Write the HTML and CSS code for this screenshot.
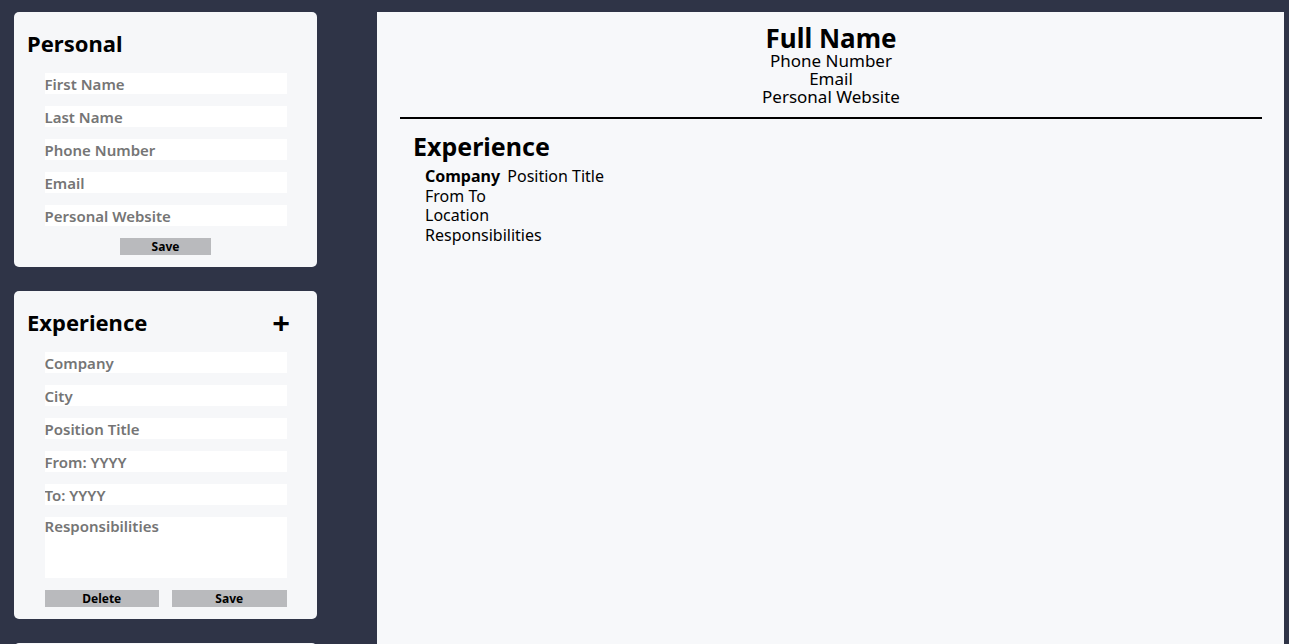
FILE: index.html
```html
<!DOCTYPE html>
<html lang="en">
<head>
<meta charset="utf-8">
<title>CV Builder</title>
<link rel="stylesheet" href="styles.css">
</head>
<body>
  <aside class="sidebar">
    <section class="card">
      <div class="card-head">
        <h2 class="card-title">Personal</h2>
      </div>
      <form class="form">
        <input class="field" type="text" placeholder="First Name">
        <input class="field" type="text" placeholder="Last Name">
        <input class="field" type="text" placeholder="Phone Number">
        <input class="field" type="text" placeholder="Email">
        <input class="field" type="text" placeholder="Personal Website">
        <button class="btn btn-single" type="button">Save</button>
      </form>
    </section>
    <section class="card">
      <div class="card-head">
        <h2 class="card-title">Experience</h2>
        <span class="add">+</span>
      </div>
      <form class="form">
        <input class="field" type="text" placeholder="Company">
        <input class="field" type="text" placeholder="City">
        <input class="field" type="text" placeholder="Position Title">
        <input class="field" type="text" placeholder="From: YYYY">
        <input class="field" type="text" placeholder="To: YYYY">
        <textarea class="field area" placeholder="Responsibilities"></textarea>
        <div class="btn-row">
          <button class="btn" type="button">Delete</button>
          <button class="btn" type="button">Save</button>
        </div>
      </form>
    </section>
    <section class="card card-next"></section>
  </aside>
  <main class="preview">
    <header class="cv-head">
      <div class="cv-name">Full Name</div>
      <div class="cv-line">Phone Number</div>
      <div class="cv-line">Email</div>
      <div class="cv-line">Personal Website</div>
    </header>
    <hr class="cv-rule">
    <section class="cv-section">
      <h2 class="cv-title">Experience</h2>
      <div class="cv-entry">
        <div><span class="cv-company">Company</span> Position Title</div>
        <div>From To</div>
        <div>Location</div>
        <div>Responsibilities</div>
      </div>
    </section>
  </main>
</body>
</html>
```
FILE: styles.css
```css
* { box-sizing: border-box; }

html, body { height: 100%; }

body {
  margin: 0;
  background: #2f3447;
  font-family: "Noto Sans", "Open Sans", sans-serif;
  display: flex;
  gap: 60px;
  padding: 12px 5px 0 14px;
  overflow: hidden;
}

.sidebar {
  width: 303px;
  flex: 0 0 303px;
  display: flex;
  flex-direction: column;
  gap: 24px;
}

.card {
  flex-shrink: 0;
  background: #f6f7f9;
  border-radius: 5px;
  padding: 19px 13px 12px;
}

.card-next { height: 120px; }

.card-head {
  display: flex;
  justify-content: space-between;
  align-items: center;
  height: 24px;
  margin-bottom: 18px;
  padding-right: 14px;
}

.card-title {
  margin: 0;
  font-size: 22px;
  font-weight: 700;
  line-height: 24px;
  color: #000;
}

.add {
  font-size: 31px;
  font-weight: 700;
  line-height: 24px;
  color: #000;
}

.form {
  display: flex;
  flex-direction: column;
  align-items: center;
  gap: 12px;
}

.field {
  width: 242px;
  height: 21px;
  border: none;
  padding: 0;
  margin: 0;
  background: #fff;
  font-family: inherit;
  font-size: 15px;
  font-weight: 600;
  color: #000;
  outline: none;
}

.field::placeholder { color: #757575; opacity: 1; }

.area {
  height: 61px;
  resize: none;
  line-height: 18px;
  display: block;
}

.btn {
  height: 17px;
  border: none;
  background: #b9babd;
  font-family: inherit;
  font-size: 12px;
  font-weight: 700;
  color: #000;
  padding: 0;
  line-height: 17px;
}

.btn-single { width: 91px; }

.btn-row {
  width: 242px;
  display: flex;
  gap: 13px;
}

.btn-row .btn { flex: 1; }

.preview {
  flex: 1;
  background: #f7f8fa;
  padding: 13px 22px 0 23px;
  color: #000;
}

.cv-head { text-align: center; }

.cv-name {
  font-size: 26px;
  font-weight: 700;
  line-height: 27px;
}

.cv-line {
  font-size: 17px;
  line-height: 18px;
}

.cv-rule {
  margin: 11px 0 0;
  border: none;
  border-top: 2px solid #000;
}

.cv-section { padding: 12px 13px 0; }

.cv-title {
  margin: 0;
  font-size: 25px;
  font-weight: 700;
  line-height: 30px;
}

.cv-entry {
  padding: 6px 12px 0;
  font-size: 16px;
  line-height: 19.5px;
}

.cv-company {
  font-weight: 700;
  margin-right: 3px;
}
```
